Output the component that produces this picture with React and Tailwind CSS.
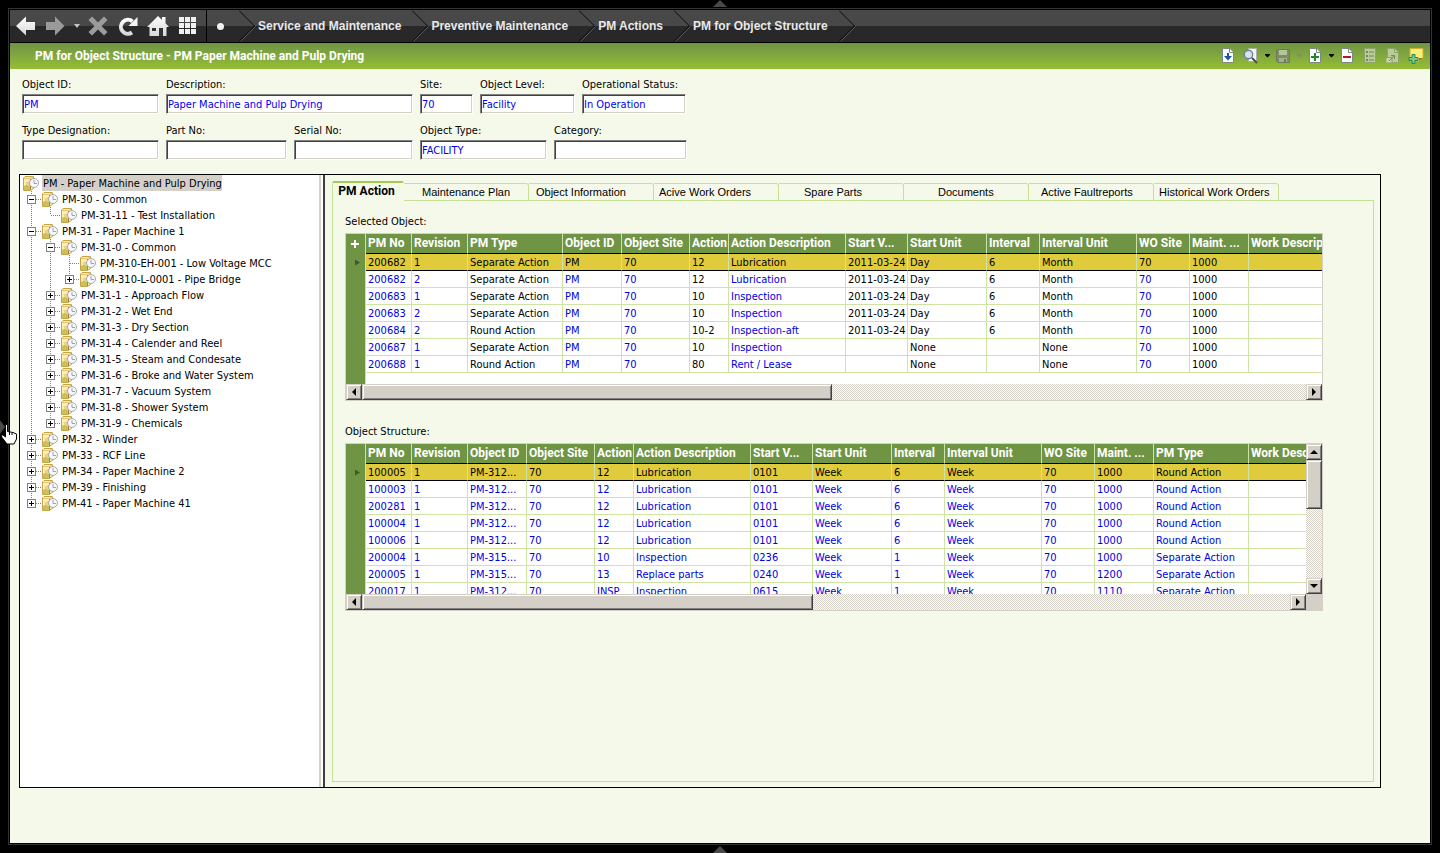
const RAISED = 'bg-[#d4d0c8] border border-t-[#d4d0c8] border-l-[#d4d0c8] border-r-[#404040] border-b-[#404040] shadow-[inset_1px_1px_0_#fff,inset_-1px_-1px_0_#808080]';
const TRACK = 'bg-[repeating-conic-gradient(#ffffff_0_25%,#d4d0c8_0_50%)] bg-[length:2px_2px]';

/* ---------- top bar ---------- */

function NavIcon({ label, width = 20, className = 'mr-[9px]', children }) {
  return (
    <button type="button" aria-label={label} className={`shrink-0 ${className}`}>
      <svg width={width} height="20" viewBox={`0 0 ${width} 20`} className="block">
        <defs>
          <linearGradient id="navLight" x1="0" y1="0" x2="0" y2="1">
            <stop offset="0" stopColor="#ffffff" />
            <stop offset="1" stopColor="#d8d8d8" />
          </linearGradient>
        </defs>
        {children}
      </svg>
    </button>
  );
}

function Chevron() {
  return (
    <svg width="17" height="32" viewBox="0 0 17 32" className="block shrink-0" aria-hidden="true">
      <path d="M0 0.5L15.5 16L0 31.5" fill="none" stroke="#0a0a0a" strokeWidth="1" />
      <path d="M1.5 31.5L16.5 16.5" fill="none" stroke="#5a5a5a" strokeWidth="1" />
    </svg>
  );
}

const CRUMBS = ['Service and Maintenance', 'Preventive Maintenance', 'PM Actions', 'PM for Object Structure'];

function NavBar() {
  return (
    <nav className="flex h-[33px] items-center border-b border-black bg-linear-to-b from-[#484848] from-50% to-[#282828] to-50% pl-[6px]">
      <NavIcon label="Back">
        <path d="M0 10L10 0.5V6H19V14H10V19.5Z" fill="url(#navLight)" />
      </NavIcon>
      <NavIcon label="Forward" className="mr-[8px]">
        <path d="M19.5 10L10 0.5V6H1V14H10V19.5Z" fill="#9a9a9a" />
      </NavIcon>
      <NavIcon label="History" width={8} className="mr-[7px]">
        <path d="M1 8H7L4 12Z" fill="#c4c4c4" />
      </NavIcon>
      <NavIcon label="Stop" className="mr-[10px]">
        <path d="M4 0.5L10 6.5L16 0.5L19.5 4L13.5 10L19.5 16L16 19.5L10 13.5L4 19.5L0.5 16L6.5 10L0.5 4Z" fill="#9c9c9c" />
      </NavIcon>
      <NavIcon label="Refresh">
        <path d="M14 16.500A7 7 0 1 1 14.500 5.500" fill="none" stroke="url(#navLight)" strokeWidth="4" />
        <path d="M19.500 1V10H10.500Z" fill="#f4f4f4" />
      </NavIcon>
      <NavIcon label="Home" width={22}>
        <path d="M11 0L15 4V1H18.5V7.2L22 11H19.5V20H2.5V11H0Z" fill="url(#navLight)" />
        <path d="M5 12H9V15H5ZM12 12H16V20H12Z" fill="#333333" />
      </NavIcon>
      <NavIcon label="Navigator" width={19} className="mr-[9px]">
        <path
          d="M1 1H6V6H1ZM7 1H12V6H7ZM13 1H18V6H13ZM1 7H6V12H1ZM7 7H12V12H7ZM13 7H18V12H13ZM1 13H6V18H1ZM7 13H12V18H7ZM13 13H18V18H13Z"
          fill="#f0f0f0"
        />
      </NavIcon>
      <div className="flex h-full items-center border-l border-black">
        <span className="mr-[15px] ml-[10px] size-[7px] rounded-full bg-[#f0f0f0]" />
        <Chevron />
        {CRUMBS.map((crumb) => (
          <div key={crumb} className="flex items-center">
            <a href="#" className="mr-[11px] ml-[2px] font-['Liberation_Sans',Arial,sans-serif] text-[12px] leading-4 font-bold whitespace-nowrap text-[#e8e8e8]">
              {crumb}
            </a>
            <Chevron />
          </div>
        ))}
      </div>
    </nav>
  );
}

/* ---------- green title bar ---------- */

function ToolIcon({ label, disabled, children }) {
  return (
    <button type="button" aria-label={label} disabled={disabled} className="size-4 shrink-0">
      <svg width="16" height="16" viewBox="0 0 16 16" className="block">{children}</svg>
    </button>
  );
}

function Caret({ label, disabled }) {
  return (
    <ToolIcon label={label} disabled={disabled}>
      <path d="M6 6H11V7L8.5 9.500L6 7Z" fill={disabled ? '#7f8f6a' : '#000000'} />
    </ToolIcon>
  );
}

function Page({ fill = '#ffffff', stroke = '#7d8a80' }) {
  return (
    <>
      <path d="M2.5 0.5H10L13.5 4V14.5H2.5Z" fill={fill} stroke={stroke} />
      <path d="M9.5 0.5V4.5H13.5" fill="none" stroke={stroke} />
    </>
  );
}

function TitleBar() {
  return (
    <header className="flex h-[26px] items-center justify-between bg-linear-to-b from-[#6f9344] to-[#95be33] pr-[6px] pl-[25px]">
      <h1 className="font-['Roboto',sans-serif] text-[12px] leading-4 font-bold whitespace-nowrap text-white">
        PM for Object Structure - PM Paper Machine and Pulp Drying
      </h1>
      <div className="flex items-center">
        <div className="mr-[7px] flex">
          <ToolIcon label="Populate">
            <Page />
            <path d="M7 5H9V8H12L8 12.500L4 8H7Z" fill="#1458a8" />
          </ToolIcon>
        </div>
        <ToolIcon label="Search">
          <path d="M5.500 0.500H13.500V13.500H5.500Z" fill="#f4f6f4" stroke="#a9b3a4" />
          <circle cx="5.500" cy="6.500" r="4.200" fill="#cfe4f2" stroke="#6f7c86" strokeWidth="1.300" />
          <path d="M9 10L14 15" stroke="#4c4c4c" strokeWidth="2" />
        </ToolIcon>
        <Caret label="Search options" />
        <ToolIcon label="Save" disabled>
          <path d="M1.500 1.500H14.500V14.500H3L1.500 13Z" fill="#7d8d68" stroke="#6b7c58" />
          <path d="M4 2H12V7H4Z" fill="#b5c499" />
          <path d="M4 10H12V14H4Z" fill="#a2b288" />
          <path d="M9 11H11V14H9Z" fill="#6b7c58" />
        </ToolIcon>
        <Caret label="Save options" disabled />
        <ToolIcon label="New">
          <Page />
          <path d="M7 5H9V8H12V10H9V13H7V10H4V8H7Z" fill="#1f8a2c" />
        </ToolIcon>
        <Caret label="New options" />
        <div className="flex gap-[7px]">
          <ToolIcon label="Remove">
            <Page />
            <path d="M4 8H12V10H4Z" fill="#b01c28" />
          </ToolIcon>
          <ToolIcon label="Details" disabled>
            <path d="M2.500 0.500H13.500V14.500H2.500Z" fill="#b9cb96" stroke="#8fa36c" />
            <path d="M4 3H6V5H4ZM4 7H6V9H4ZM4 11H6V13H4ZM7 3.500H12V4.500H7ZM7 7.500H12V8.500H7ZM7 11.500H12V12.500H7Z" fill="#74875a" />
          </ToolIcon>
          <ToolIcon label="Export" disabled>
            <Page fill="#b9cb96" stroke="#8fa36c" />
            <path d="M1 9.500H7V15H1Z" fill="#c8d8a8" stroke="#8fa36c" />
            <path d="M4 13L9 8M6 7.500H9.500V11" fill="none" stroke="#74875a" />
          </ToolIcon>
          <ToolIcon label="Add note">
            <path d="M2 0.500H15V10L11 13H2Z" fill="#f9ef74" stroke="#c9b33c" />
            <path d="M11 13V10H15Z" fill="#8a7a20" />
            <path d="M4 6.500H7V9.500H10V12.500H7V15.500H4V12.500H1V9.500H4Z" fill="#7fc58a" stroke="#2d8a50" />
          </ToolIcon>
        </div>
      </div>
    </header>
  );
}

/* ---------- object fields ---------- */

const FIELD_ROWS = [
  [
    { id: 'objectId', label: 'Object ID:', value: 'PM', width: 'w-[137px]' },
    { id: 'description', label: 'Description:', value: 'Paper Machine and Pulp Drying', width: 'w-[247px]' },
    { id: 'site', label: 'Site:', value: '70', width: 'w-[53px]' },
    { id: 'objectLevel', label: 'Object Level:', value: 'Facility', width: 'w-[95px]' },
    { id: 'status', label: 'Operational Status:', value: 'In Operation', width: 'w-[104px]' },
  ],
  [
    { id: 'typeDesignation', label: 'Type Designation:', value: '', width: 'w-[137px]' },
    { id: 'partNo', label: 'Part No:', value: '', width: 'w-[121px]' },
    { id: 'serialNo', label: 'Serial No:', value: '', width: 'w-[119px]' },
    { id: 'objectType', label: 'Object Type:', value: 'FACILITY', width: 'w-[127px]' },
    { id: 'category', label: 'Category:', value: '', width: 'w-[133px]' },
  ],
];

function ObjectFields() {
  return (
    <form className="flex flex-col gap-[9px] pt-2 pl-3">
      {FIELD_ROWS.map((row, i) => (
        <div key={i} className="flex gap-[7px]">
          {row.map((f) => (
            <div key={f.id} className={`flex shrink-0 flex-col gap-px ${f.width}`}>
              <label htmlFor={f.id} className="leading-4 whitespace-nowrap">{f.label}</label>
              <input
                id={f.id}
                type="text"
                defaultValue={f.value}
                className="h-[20px] w-full border border-t-[#808080] border-r-white border-b-white border-l-[#808080] bg-white px-px text-[#0000f0] shadow-[inset_1px_1px_0_#404040,inset_-1px_-1px_0_#d4d0c8] outline-none"
              />
            </div>
          ))}
        </div>
      ))}
    </form>
  );
}

/* ---------- object tree ---------- */

const TREE = {
  name: 'PM - Paper Machine and Pulp Drying',
  children: [
    { name: 'PM-30 - Common', children: [{ name: 'PM-31-11 - Test Installation' }] },
    {
      name: 'PM-31 - Paper Machine 1',
      children: [
        {
          name: 'PM-31-0 - Common',
          children: [
            { name: 'PM-310-EH-001 - Low Voltage MCC' },
            { name: 'PM-310-L-0001 - Pipe Bridge', closed: true },
          ],
        },
        { name: 'PM-31-1 - Approach Flow', closed: true },
        { name: 'PM-31-2 - Wet End', closed: true },
        { name: 'PM-31-3 - Dry Section', closed: true },
        { name: 'PM-31-4 - Calender and Reel', closed: true },
        { name: 'PM-31-5 - Steam and Condesate', closed: true },
        { name: 'PM-31-6 - Broke and Water System', closed: true },
        { name: 'PM-31-7 - Vacuum System', closed: true },
        { name: 'PM-31-8 - Shower System', closed: true },
        { name: 'PM-31-9 - Chemicals', closed: true },
      ],
    },
    { name: 'PM-32 - Winder', closed: true },
    { name: 'PM-33 - RCF Line', closed: true },
    { name: 'PM-34 - Paper Machine 2', closed: true },
    { name: 'PM-39 - Finishing', closed: true },
    { name: 'PM-41 - Paper Machine 41', closed: true },
  ],
};

function Guide({ vertical, branch }) {
  // vertical: 'full' | 'half' | undefined
  return (
    <svg width="19" height="16" viewBox="0 0 19 16" className="block shrink-0" aria-hidden="true" stroke="#808080" strokeDasharray="1 1" shapeRendering="crispEdges">
      {vertical && <path d={vertical === 'full' ? 'M8.5 0V16' : 'M8.5 0V8'} />}
      {branch && <path d="M9 8.5H18" />}
    </svg>
  );
}

function Toggle({ closed, last }) {
  return (
    <button type="button" aria-label={closed ? 'Expand' : 'Collapse'} className="shrink-0">
      <svg width="19" height="16" viewBox="0 0 19 16" className="block" shapeRendering="crispEdges">
        <path d={last ? 'M8.5 0V8M9 8.5H18' : 'M8.5 0V16M9 8.5H18'} stroke="#808080" strokeDasharray="1 1" />
        <rect x="4.5" y="4.5" width="8" height="8" fill="#ffffff" stroke="#808080" />
        <path d={closed ? 'M6 8.5H11M8.5 6V11' : 'M6 8.5H11'} stroke="#000000" />
      </svg>
    </button>
  );
}

function ObjectIcon() {
  return (
    <svg width="16" height="16" viewBox="0 0 16 16" className="mr-[3px] block shrink-0" aria-hidden="true">
      <path d="M0.500 3L2 1.500H10.500V13.500L7 15.500H0.500Z" fill="#f9f2ac" stroke="#c9a04c" />
      <path d="M1 3.500H7L10 2" fill="none" stroke="#dcc968" />
      <path d="M1 11L3.500 9.500L7 11V15H1Z" fill="#c3c557" />
      <path d="M2.500 7.500L7 6V11L3.500 9.500Z" fill="#f7c79a" />
      <path d="M7.500 4V15" stroke="#b57c32" />
      <circle cx="11" cy="8" r="4.500" fill="#f6f8fc" stroke="#a8a8a8" />
      <path d="M11 5V8.500H14" fill="none" stroke="#9aa2b2" />
    </svg>
  );
}

function TreeNode({ node, guides, last, root }) {
  const kids = node.children || [];
  return (
    <li role="treeitem" aria-selected={Boolean(root)}>
      <div className="flex h-4 items-center">
        {guides.map((on, i) => <Guide key={i} vertical={on ? 'full' : undefined} />)}
        {!root && (kids.length > 0 || node.closed
          ? <Toggle closed={node.closed} last={last} />
          : <Guide vertical={last ? 'half' : 'full'} branch />)}
        <ObjectIcon />
        <span className={`pt-[2px] pl-px leading-[14px] whitespace-nowrap ${root ? 'bg-[#d4d0c8]' : ''}`}>{node.name}</span>
      </div>
      {kids.length > 0 && (
        <ul role="group">
          {kids.map((kid, i) => (
            <TreeNode key={kid.name} node={kid} last={i === kids.length - 1} guides={root ? [] : [...guides, !last]} />
          ))}
        </ul>
      )}
    </li>
  );
}

/* ---------- grids ---------- */

function ScrollButton({ dir }) {
  const arrows = {
    left: 'M8 2V10L4 6Z',
    right: 'M4 2V10L8 6Z',
    up: 'M2 8H10L6 4Z',
    down: 'M2 4H10L6 8Z',
  };
  return (
    <button type="button" aria-label={`Scroll ${dir}`} className={`flex size-4 shrink-0 items-center justify-center ${RAISED}`}>
      <svg width="12" height="12" viewBox="0 0 12 12" className="block shrink-0"><path d={arrows[dir]} /></svg>
    </button>
  );
}

function Grid({ columns, rows, addable, tall, thumb, linked }) {
  return (
    <div className="border border-[#d4d0c8] bg-white">
      <div className="flex h-[150px]">
        <div className="flex w-[20px] shrink-0 flex-col items-center border-r border-[#cfe3a4] bg-[#6f9444]">
          <div className="flex h-[20px] items-center pr-px">
            {addable && (
              <button type="button" aria-label="Add row">
                <svg width="8" height="8" viewBox="0 0 8 8" className="block"><path d="M3 0H5V3H8V5H5V8H3V5H0V3H3Z" fill="#ffffff" /></svg>
              </button>
            )}
          </div>
          <svg width="5" height="16" viewBox="0 0 5 16" className="ml-[4px] block"><path d="M0 5.500L5 8.500L0 11.500Z" fill="#3f5a22" /></svg>
        </div>
        <div className="min-w-0 flex-1 overflow-hidden">
          <table className="w-full table-fixed border-separate border-spacing-0">
            <colgroup>
              {columns.map(([name, width]) => <col key={name} className={width} />)}
            </colgroup>
            <thead>
              <tr>
                {columns.map(([name]) => (
                  <th key={name} scope="col" className="h-[20px] overflow-hidden border-r border-b border-r-[#cfe3a4] border-b-black bg-[#6f9444] p-0 pb-[2px] pl-[2px] text-left font-['Roboto',sans-serif] text-[12px] leading-4 font-bold whitespace-nowrap text-white last:border-r-0">
                    {name}
                  </th>
                ))}
              </tr>
            </thead>
            <tbody>
              {rows.map((row, r) => (
                <tr key={r} className={r === 0 ? 'bg-[#e0cb3c]' : 'bg-white'}>
                  {columns.map(([name], c) => (
                    <td
                      key={name}
                      className={`h-[17px] overflow-hidden border-r border-b border-r-[#cfe3a4] p-0 pt-[2px] pl-[2px] leading-[14px] whitespace-nowrap last:border-r-0 ${r === 0 ? 'border-b-black' : 'border-b-[#cfe3a4]'} ${r > 0 && linked(name) ? 'text-[#0000e0]' : 'text-black'}`}
                    >
                      {row[c]}
                    </td>
                  ))}
                </tr>
              ))}
            </tbody>
          </table>
        </div>
        {tall && (
          <div className={`flex w-4 shrink-0 flex-col ${TRACK}`}>
            <ScrollButton dir="up" />
            <div className={`h-[49px] ${RAISED}`} />
            <div className="flex-1" />
            <ScrollButton dir="down" />
          </div>
        )}
      </div>
      <div className="flex h-4 bg-[#d4d0c8]">
        <div className={`flex flex-1 ${TRACK}`}>
          <ScrollButton dir="left" />
          <div className={`${thumb} ${RAISED}`} />
          <div className="flex-1" />
          <ScrollButton dir="right" />
        </div>
        {tall && <div className="w-4" />}
      </div>
    </div>
  );
}

const SELECTED_COLUMNS = [
  ['PM No', 'w-[46px]'],
  ['Revision', 'w-[56px]'],
  ['PM Type', 'w-[95px]'],
  ['Object ID', 'w-[59px]'],
  ['Object Site', 'w-[68px]'],
  ['Action', 'w-[39px]'],
  ['Action Description', 'w-[117px]'],
  ['Start V...', 'w-[62px]'],
  ['Start Unit', 'w-[79px]'],
  ['Interval', 'w-[53px]'],
  ['Interval Unit', 'w-[97px]'],
  ['WO Site', 'w-[53px]'],
  ['Maint. ...', 'w-[59px]'],
  ['Work Description', ''],
];

const SELECTED_ROWS = [
  ['200682', '1', 'Separate Action', 'PM', '70', '12', 'Lubrication', '2011-03-24', 'Day', '6', 'Month', '70', '1000', ''],
  ['200682', '2', 'Separate Action', 'PM', '70', '12', 'Lubrication', '2011-03-24', 'Day', '6', 'Month', '70', '1000', ''],
  ['200683', '1', 'Separate Action', 'PM', '70', '10', 'Inspection', '2011-03-24', 'Day', '6', 'Month', '70', '1000', ''],
  ['200683', '2', 'Separate Action', 'PM', '70', '10', 'Inspection', '2011-03-24', 'Day', '6', 'Month', '70', '1000', ''],
  ['200684', '2', 'Round Action', 'PM', '70', '10-2', 'Inspection-aft', '2011-03-24', 'Day', '6', 'Month', '70', '1000', ''],
  ['200687', '1', 'Separate Action', 'PM', '70', '10', 'Inspection', '', 'None', '', 'None', '70', '1000', ''],
  ['200688', '1', 'Round Action', 'PM', '70', '80', 'Rent / Lease', '', 'None', '', 'None', '70', '1000', ''],
];

const SELECTED_LINKS = ['PM No', 'Revision', 'Object ID', 'Object Site', 'Action Description', 'WO Site'];

const STRUCTURE_COLUMNS = [
  ['PM No', 'w-[46px]'],
  ['Revision', 'w-[56px]'],
  ['Object ID', 'w-[59px]'],
  ['Object Site', 'w-[68px]'],
  ['Action', 'w-[39px]'],
  ['Action Description', 'w-[117px]'],
  ['Start V...', 'w-[62px]'],
  ['Start Unit', 'w-[79px]'],
  ['Interval', 'w-[53px]'],
  ['Interval Unit', 'w-[97px]'],
  ['WO Site', 'w-[53px]'],
  ['Maint. ...', 'w-[59px]'],
  ['PM Type', 'w-[95px]'],
  ['Work Description', ''],
];

const STRUCTURE_ROWS = [
  ['100005', '1', 'PM-312...', '70', '12', 'Lubrication', '0101', 'Week', '6', 'Week', '70', '1000', 'Round Action', ''],
  ['100003', '1', 'PM-312...', '70', '12', 'Lubrication', '0101', 'Week', '6', 'Week', '70', '1000', 'Round Action', ''],
  ['200281', '1', 'PM-312...', '70', '12', 'Lubrication', '0101', 'Week', '6', 'Week', '70', '1000', 'Round Action', ''],
  ['100004', '1', 'PM-312...', '70', '12', 'Lubrication', '0101', 'Week', '6', 'Week', '70', '1000', 'Round Action', ''],
  ['100006', '1', 'PM-312...', '70', '12', 'Lubrication', '0101', 'Week', '6', 'Week', '70', '1000', 'Round Action', ''],
  ['200004', '1', 'PM-315...', '70', '10', 'Inspection', '0236', 'Week', '1', 'Week', '70', '1000', 'Separate Action', ''],
  ['200005', '1', 'PM-315...', '70', '13', 'Replace parts', '0240', 'Week', '1', 'Week', '70', '1200', 'Separate Action', ''],
  ['200017', '1', 'PM-312...', '70', 'INSP', 'Inspection', '0615', 'Week', '1', 'Week', '70', '1110', 'Separate Action', ''],
];

/* ---------- tabs ---------- */

const TABS = [
  ['Maintenance Plan', 'pl-[18px]'],
  ['Object Information', 'pl-[7px]'],
  ['Acive Work Orders', 'pl-[5px]'],
  ['Spare Parts', 'pl-[25px]'],
  ['Documents', 'pl-[34px]'],
  ['Active Faultreports', 'pl-[12px]'],
  ['Historical Work Orders', 'pl-[5px]'],
];

function Tabs() {
  return (
    <div role="tablist" className="relative z-10 -mb-px flex items-end">
      <button
        type="button"
        role="tab"
        aria-selected="true"
        className="h-[20px] w-[72px] rounded-t-[2px] border-x border-t-2 border-x-[#c8e096] border-t-[#a3cb52] border-r-transparent bg-[#f5f9ea] pr-[3px] pb-[3px] font-['Roboto',sans-serif] text-[12px] leading-4 font-bold whitespace-nowrap"
      >
        PM Action
      </button>
      {TABS.map(([tab, indent]) => (
        <button
          key={tab}
          type="button"
          role="tab"
          aria-selected="false"
          className={`h-[18px] w-[125px] rounded-tr-[3px] border border-l-0 border-[#c8e096] bg-[#f5f9ea] text-left font-['Liberation_Sans',Arial,sans-serif] leading-4 whitespace-nowrap ${indent}`}
        >
          {tab}
        </button>
      ))}
    </div>
  );
}

function DrawerHandle({ className }) {
  return (
    <svg width="14" height="7" viewBox="0 0 14 7" className={`absolute left-1/2 -translate-x-1/2 ${className}`} aria-hidden="true">
      <path d="M0 7L7 0L14 7Z" fill="#4a4a4a" />
    </svg>
  );
}

export default function App() {
  return (
    <div className="relative flex min-h-screen flex-col bg-black p-2 font-['DejaVu_Sans_Condensed',sans-serif] text-[11px] text-black">
      <DrawerHandle className="top-0" />
      <div className="flex flex-1 flex-col border border-[#333333] p-px">
        <NavBar />
        <TitleBar />
        <main className="flex flex-1 flex-col bg-[#f5f9ea]">
          <ObjectFields />
          <div className="mt-[14px] mr-[49px] mb-[55px] ml-[9px] flex flex-1 border border-black">
            <aside className="w-[305px] shrink-0 border-r-2 border-[#404040] bg-white">
              <div className="mr-[2px] h-full border-r-2 border-[#d4d0c8] pl-[3px]">
                <ul role="tree">
                  <TreeNode node={TREE} guides={[]} last root />
                </ul>
              </div>
            </aside>
            <section className="flex min-w-0 flex-1 flex-col pt-[6px] pr-[6px] pb-[5px] pl-[7px]">
              <Tabs />
              <div role="tabpanel" className="flex-1 border border-[#c8e096] pr-[50px] pl-[12px]">
                <h2 className="mt-[13px] mb-[3px] leading-4">Selected Object:</h2>
                <Grid
                  columns={SELECTED_COLUMNS}
                  rows={SELECTED_ROWS}
                  linked={(name) => SELECTED_LINKS.includes(name)}
                  thumb="w-[470px]"
                  addable
                />
                <h2 className="mt-[23px] mb-[3px] leading-4">Object Structure:</h2>
                <Grid columns={STRUCTURE_COLUMNS} rows={STRUCTURE_ROWS} linked={() => true} thumb="w-[451px]" tall />
              </div>
            </section>
          </div>
        </main>
      </div>
      <DrawerHandle className="bottom-0" />
      <svg width="18" height="26" viewBox="0 0 18 26" className="absolute top-[420px] left-0" aria-hidden="true">
        <path d="M0 0L5 7L0 14Z" fill="#4a4a4a" />
        <path d="M5.500 4.500H7.500V11.500L13 12.500L16.500 14V19L14 24H7L2 17.500L1 15H3L5.500 17Z" fill="#ffffff" stroke="#000000" />
        <path d="M9.500 12V15M12 13V15" stroke="#000000" />
      </svg>
    </div>
  );
}
